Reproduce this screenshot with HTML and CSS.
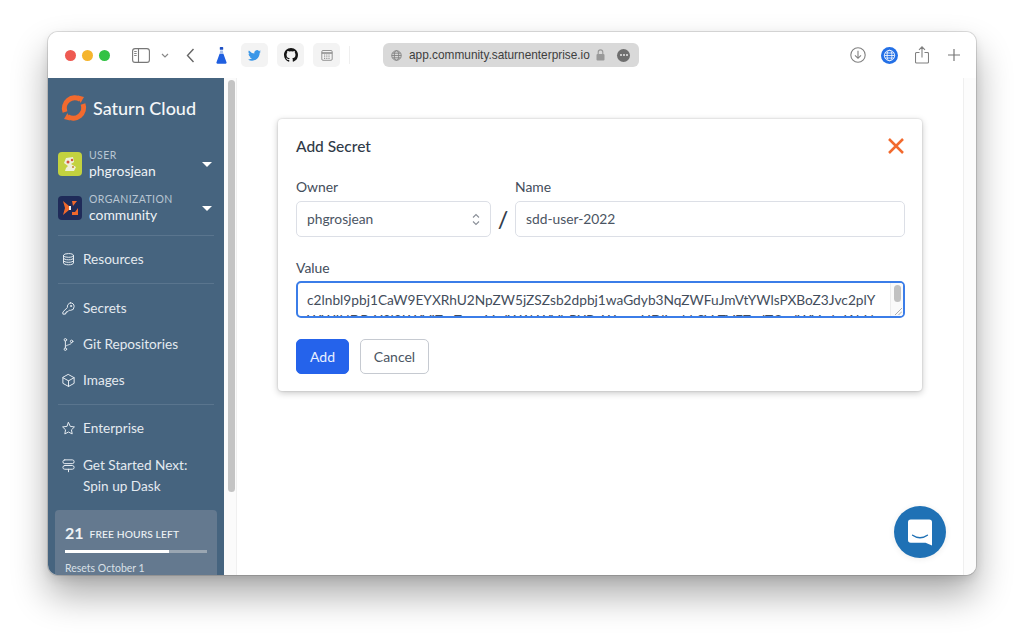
FILE: index.html
```html
<!DOCTYPE html>
<html lang="en">
<head>
<meta charset="utf-8">
<title>Saturn Cloud - Add Secret</title>
<link rel="stylesheet" href="styles.css">
</head>
<body>
<div class="window">
  <header class="toolbar">
    <div class="lights"><span class="light red"></span><span class="light yellow"></span><span class="light green"></span></div>
    <svg class="tb-sidebar" width="18" height="15" viewBox="0 0 18 15" fill="none" stroke="#777" stroke-width="1.1"><rect x=".6" y=".6" width="16.8" height="13.8" rx="2.5"/><path d="M6.5 .6v13.8"/><path d="M2.2 3.5h2.5M2.2 5.5h2.5M2.2 7.5h2.5" stroke-width=".9"/></svg>
    <svg class="tb-chev" width="8" height="5" viewBox="0 0 8 5" fill="none" stroke="#888" stroke-width="1.2"><path d="M1 1l3 3 3-3"/></svg>
    <svg class="tb-back" width="9" height="15" viewBox="0 0 9 15" fill="none" stroke="#666" stroke-width="1.4"><path d="M7.5 1L1.5 7.5l6 6.5"/></svg>
    <svg class="tb-flask" width="11" height="17" viewBox="0 0 10 16"><rect x="3.4" y="0" width="3.2" height="2.6" rx=".6" fill="#1d4fc4"/><path d="M3.8 3.2h2.4l.5 3H3.3z" fill="#a9c1ea"/><path d="M3.2 6.4h3.600l2.900 8a1 1 0 0 1-1 1.400H1.300a1 1 0 0 1-1-1.400z" fill="#1f5fe0"/></svg>
    <div class="tiles">
      <span class="tile"><svg width="13" height="11" viewBox="0 0 24 20"><path fill="#3a97e8" d="M24 2.400a9.800 9.800 0 0 1-2.800.8A4.900 4.900 0 0 0 23.300.5a9.800 9.800 0 0 1-3.100 1.200 4.900 4.900 0 0 0-8.400 4.500A14 14 0 0 1 1.700.9a4.900 4.900 0 0 0 1.500 6.600 4.900 4.900 0 0 1-2.200-.6v.1a4.900 4.900 0 0 0 3.900 4.800 4.900 4.900 0 0 1-2.200.1 4.900 4.900 0 0 0 4.600 3.400A9.900 9.900 0 0 1 0 17.300 14 14 0 0 0 7.500 19.500c9.100 0 14-7.500 14-14v-.6A10 10 0 0 0 24 2.400z"/></svg></span>
      <span class="tile"><svg width="14" height="14" viewBox="0 0 16 16"><path fill="#161616" d="M8 0C3.580 0 0 3.580 0 8c0 3.540 2.290 6.530 5.470 7.590.4.070.55-.17.55-.38 0-.19-.01-.82-.01-1.490-2.010.37-2.530-.49-2.690-.94-.09-.23-.48-.94-.82-1.130-.28-.15-.68-.52-.01-.53.63-.01 1.080.58 1.230.82.720 1.210 1.870.87 2.330.66.070-.52.280-.87.510-1.070-1.780-.2-3.640-.89-3.640-3.950 0-.87.310-1.590.820-2.150-.08-.2-.36-1.020.08-2.120 0 0 .67-.21 2.200.82a7.420 7.420 0 0 1 4 0c1.530-1.040 2.200-.82 2.200-.82.440 1.100.16 1.920.08 2.120.51.560.82 1.270.82 2.150 0 3.070-1.870 3.750-3.650 3.950.29.250.54.730.54 1.480 0 1.070-.01 1.930-.01 2.200 0 .21.150.46.550.38A8.010 8.010 0 0 0 16 8c0-4.420-3.580-8-8-8z"/></svg></span>
      <span class="tile"><svg width="12" height="12" viewBox="0 0 12 12" fill="none" stroke="#8a8a8a" stroke-width=".9"><rect x=".8" y="1.500" width="10.400" height="9.800" rx="1.200"/><path d="M.8 4h10.400" stroke-width="1.500"/><path d="M3 6h6M3 7.800h6M3 9.500h6" stroke-dasharray="1 .8"/></svg></span>
    </div>
    <span class="tb-sep"></span>
    <div class="urlbar">
      <svg width="11" height="11" viewBox="0 0 12 12" fill="none" stroke="#7c7c7c" stroke-width=".9"><circle cx="6" cy="6" r="5.200"/><ellipse cx="6" cy="6" rx="2.400" ry="5.200"/><path d="M.8 6h10.400M1.500 3.500h9M1.500 8.500h9"/></svg>
      <span class="url">app.community.saturnenterprise.io</span>
      <svg width="9" height="12" viewBox="0 0 9 12"><rect x=".5" y="5" width="8" height="6.500" rx="1" fill="#999"/><path d="M2.200 5V3.200a2.300 2.300 0 0 1 4.600 0V5" fill="none" stroke="#999" stroke-width="1.100"/></svg>
      <span class="more"><i></i><i></i><i></i></span>
    </div>
    <div class="tb-right">
      <svg width="16" height="16" viewBox="0 0 16 16" fill="none" stroke="#808080" stroke-width="1.100"><circle cx="8" cy="8" r="7.200"/><path d="M8 3.800v7.400M5 8.300l3 3 3-3"/></svg>
      <svg width="17" height="17" viewBox="0 0 17 17"><circle cx="8.500" cy="8.500" r="8.500" fill="#2470e6"/><g fill="none" stroke="#fff" stroke-width=".8"><circle cx="8.500" cy="8.500" r="5.200"/><ellipse cx="8.500" cy="8.500" rx="2.400" ry="5.200"/><path d="M3.300 8.500h10.400M4 6h9M4 11h9"/></g></svg>
      <svg width="14" height="18" viewBox="0 0 14 18" fill="none" stroke="#808080" stroke-width="1.100"><path d="M4.500 6.500H1.500a1 1 0 0 0-1 1v8.500a1 1 0 0 0 1 1h11a1 1 0 0 0 1-1V7.500a1 1 0 0 0-1-1H9.500M7 11.500V1M4 3.800L7 .8l3 3"/></svg>
      <svg width="12" height="12" viewBox="0 0 12 12" fill="none" stroke="#777" stroke-width="1.200"><path d="M6 0v12M0 6h12"/></svg>
    </div>
  </header>

  <div class="viewport">
    <aside class="sidebar">
      <div class="brand">
        <svg width="26" height="26" viewBox="0 0 26 26" fill="none" stroke="#f26a2e" stroke-width="5"><path d="M4 17A10.500 10.500 0 0 1 19.500 4.500"/><path d="M22 9A10.500 10.500 0 0 1 6.500 21.500"/><path d="M17 0.500l6 1.500-3.500 6z" fill="#f26a2e" stroke="none"/><path d="M9 25.500l-6-1.500 3.500-6z" fill="#f26a2e" stroke="none"/></svg>
        <span class="brand-name">Saturn Cloud</span>
      </div>
      <div class="accounts">
        <div class="account">
          <svg class="avatar" width="24" height="24" viewBox="0 0 24 24"><rect width="24" height="24" rx="4" fill="#c3d23f"/><path d="M8 6l7-1 1 5-3 2 5 3-2 4H7l1-3 2-2-4-3z" fill="#eef0d8"/><circle cx="10" cy="10" r="1.500" fill="#d8553c"/><circle cx="14" cy="8" r="1.200" fill="#d8553c"/><circle cx="15" cy="15" r="1.100" fill="#c98a3c"/></svg>
          <div class="account-text"><span class="account-kind">USER</span><span class="account-name">phgrosjean</span></div>
          <span class="caret"></span>
        </div>
        <div class="account">
          <svg class="avatar" width="24" height="24" viewBox="0 0 24 24"><rect width="24" height="24" rx="4" fill="#1f2b59"/><path d="M5 5l6 5 2 0v4l-2 0-6 5 2-7z" fill="#f0682c"/><path d="M11 10h2v4h-2z" fill="#f4f1ec"/><path d="M14 5h5l-4 5zM14 19h6v-7l-3 4h-3z" fill="#f0682c"/></svg>
          <div class="account-text"><span class="account-kind">ORGANIZATION</span><span class="account-name">community</span></div>
          <span class="caret"></span>
        </div>
      </div>
      <nav class="nav">
        <div class="nav-group">
          <a class="nav-item"><svg class="nav-icon" viewBox="0 0 24 24"><ellipse cx="12" cy="5.500" rx="8" ry="3"/><path d="M4 5.500v4c0 1.700 3.600 3 8 3s8-1.300 8-3v-4M4 9.500v4c0 1.700 3.600 3 8 3s8-1.300 8-3v-4M4 13.500v4c0 1.700 3.600 3 8 3s8-1.300 8-3v-4"/></svg>Resources</a>
        </div>
        <div class="nav-group">
          <a class="nav-item"><svg class="nav-icon" viewBox="0 0 24 24"><path d="M15 3a6 6 0 0 1 0 12c-.7 0-1.300-.1-1.900-.3L11 17H9v2H7v2H3v-3.500l7.300-7.200A6 6 0 0 1 15 3z"/><circle cx="16" cy="8" r="1"/></svg>Secrets</a>
          <a class="nav-item"><svg class="nav-icon" viewBox="0 0 24 24"><circle cx="7" cy="4.500" r="2"/><circle cx="7" cy="19.500" r="2"/><circle cx="17" cy="7" r="2"/><path d="M7 6.500v11M17 9c0 4-10 3-10 7"/></svg>Git Repositories</a>
          <a class="nav-item"><svg class="nav-icon" viewBox="0 0 24 24"><path d="M12 2.500l9 5v9l-9 5-9-5v-9zM3 7.500l9 5 9-5M12 12.500v9"/></svg>Images</a>
        </div>
        <div class="nav-group">
          <a class="nav-item"><svg class="nav-icon" viewBox="0 0 24 24"><path d="M12 2.500l2.900 6.100 6.600.9-4.800 4.600 1.200 6.600L12 17.600l-5.900 3.100 1.200-6.600L2.500 9.500l6.600-.9z"/></svg>Enterprise</a>
          <a class="nav-item two-line"><svg class="nav-icon" viewBox="0 0 24 24"><rect x="3" y="3" width="18" height="6" rx="3"/><rect x="3" y="12" width="18" height="6" rx="3"/><path d="M12 18v4"/></svg><span>Get Started Next:<br>Spin up Dask</span></a>
        </div>
      </nav>
      <div class="hours">
        <div class="hours-head"><strong>21</strong><span>FREE HOURS LEFT</span></div>
        <div class="hours-bar"><div class="hours-fill"></div></div>
        <div class="hours-note">Resets October 1</div>
      </div>
    </aside>
    <div class="scrolltrack"><div class="scrollthumb"></div></div>
    <main class="main">
      <section class="dialog">
        <div class="dialog-head">
          <h1>Add Secret</h1>
          <svg width="16" height="16" viewBox="0 0 16 16" fill="none" stroke="#f26a2e" stroke-width="2.500"><path d="M1 1l14 14M15 1L1 15"/></svg>
        </div>
        <div class="owner-row">
          <div class="field owner">
            <label>Owner</label>
            <div class="control select">phgrosjean
              <svg width="8" height="13" viewBox="0 0 8 13" fill="none" stroke="#8a8f98" stroke-width="1.100"><path d="M1 4.500L4 1.500l3 3M1 8.500l3 3 3-3"/></svg>
            </div>
          </div>
          <span class="slash">/</span>
          <div class="field name">
            <label>Name</label>
            <div class="control">sdd-user-2022</div>
          </div>
        </div>
        <div class="field value">
          <label>Value</label>
          <div class="textarea">
            <div class="textarea-text">c2lnbl9pbj1CaW9EYXRhU2NpZW5jZSZsb2dpbj1waGdyb3NqZWFuJmVtYWlsPXBoZ3Jvc2plY<br>WWINDBzY2l2LWVjZmZzcmVzdW1hWVlsPXBoWmxoUDljcnhbSVcTVFZvdTQzdWVxdcJAbN</div>
            <div class="ta-scroll"><span></span></div>
            <svg class="ta-grip" width="7" height="7" viewBox="0 0 7 7" stroke="#999" stroke-width=".8"><path d="M0 7L7 0M3.500 7L7 3.500"/></svg>
          </div>
        </div>
        <div class="actions">
          <button class="btn primary">Add</button>
          <button class="btn">Cancel</button>
        </div>
      </section>
      <button class="launcher" aria-label="Chat">
        <svg width="24" height="27" viewBox="0 0 26 28"><path fill="#fff" d="M3 0h20a3 3 0 0 1 3 3v25l-7-3H3a3 3 0 0 1-3-3V3a3 3 0 0 1 3-3z"/><path d="M5 17c5 3.500 11 3.500 16 0" fill="none" stroke="#1f71b5" stroke-width="1.600" stroke-linecap="round"/></svg>
      </button>
    </main>
    <div class="rightstrip"></div>
  </div>
</div>
</body>
</html>
```

FILE: styles.css
```css
* { box-sizing: border-box; }
html, body { margin: 0; height: 100%; }
body {
  background: #fff;
  padding: 32px 48px 0;
  font-family: Lato, "Liberation Sans", sans-serif;
  overflow: hidden;
}
.window {
  width: 928px;
  height: 543px;
  border-radius: 10px;
  background: #fff;
  overflow: hidden;
  display: flex;
  flex-direction: column;
  box-shadow: 0 0 0 1px rgba(0,0,0,.12), 0 20px 36px rgba(0,0,0,.33), 0 4px 10px rgba(0,0,0,.1);
}
.toolbar {
  height: 46px;
  flex: none;
  display: flex;
  align-items: center;
  background: #fff;
  font-family: "Liberation Sans", sans-serif;
}
.lights { display: flex; gap: 6px; margin-left: 17px; }
.light { width: 11px; height: 11px; border-radius: 50%; }
.red { background: #ee5a52; }
.yellow { background: #f5b52e; }
.green { background: #32c244; }
.tb-sidebar { margin-left: 22px; }
.tb-chev { margin-left: 11px; }
.tb-back { margin-left: 17px; }
.tb-flask { margin-left: 21px; }
.tiles { display: flex; gap: 9px; margin-left: 14px; }
.tile {
  width: 27px;
  height: 24px;
  border-radius: 5px;
  background: #f3f3f3;
  display: flex;
  align-items: center;
  justify-content: center;
}
.tb-sep { width: 1px; height: 18px; background: #efefef; margin-left: 9px; }
.urlbar {
  width: 256px;
  height: 24px;
  margin-left: 33px;
  border-radius: 6px;
  background: #d9d9d9;
  display: flex;
  align-items: center;
  padding: 0 9px 0 8px;
}
.url { font-size: 11.850px; color: #3e3e3e; margin-left: 7px; margin-right: 6px; white-space: nowrap; }
.more {
  width: 13px;
  height: 13px;
  border-radius: 50%;
  background: #6e6e6e;
  margin-left: auto;
  display: flex;
  align-items: center;
  justify-content: center;
  gap: 1px;
}
.more i { width: 2px; height: 2px; border-radius: 50%; background: #e6e6e6; }
.tb-right {
  margin-left: auto;
  margin-right: 6.500px;
  display: grid;
  grid-template-columns: repeat(4, 32px);
  justify-items: center;
  align-items: center;
}
.viewport { flex: 1; min-height: 0; display: flex; }
.sidebar {
  width: 176px;
  flex: none;
  background: #46647f;
  color: #e4eaf0;
  overflow: hidden;
}
.brand { height: 60px; display: flex; align-items: center; gap: 6px; padding-left: 13px; }
.brand-name { font-size: 18px; color: #f4f6f8; font-weight: 500; }
.accounts {
  margin: 14px 10px 0;
  padding-bottom: 15px;
  display: flex;
  flex-direction: column;
  gap: 20px;
  border-bottom: 1px solid #5a758e;
}
.account { display: flex; align-items: center; height: 24px; }
.avatar { flex: none; }
.account-text { display: flex; flex-direction: column; margin-left: 7px; }
.account-kind { font-size: 10.500px; line-height: 14px; letter-spacing: .4px; color: #b9c6d3; }
.account-name { font-size: 13.900px; line-height: 18px; color: #eef2f5; }
.caret {
  margin-left: auto;
  margin-right: 2px;
  border-left: 5px solid transparent;
  border-right: 5px solid transparent;
  border-top: 5px solid #fff;
}
.nav { margin: 0 10px; }
.nav-group { padding: 5px 0 7px; border-bottom: 1px solid #5a758e; }
.nav-group:first-child { padding-top: 4px; }
.nav-group:last-child { border-bottom: 0; padding: 4px 0 0; }
.nav-item {
  min-height: 36px;
  display: flex;
  align-items: center;
  gap: 7px;
  padding: 2px 0 0 3px;
  font-size: 13.600px;
  line-height: 21px;
  color: #e4eaf0;
}
.two-line { align-items: flex-start; padding-top: 10px; margin-bottom: -1px; }
.two-line .nav-icon { margin-top: 3px; }
.nav-icon {
  width: 15px;
  height: 15px;
  flex: none;
  fill: none;
  stroke: #e4eaf0;
  stroke-width: 1.600;
  stroke-linejoin: round;
  stroke-linecap: round;
}
.hours {
  margin: 14px 7px 0;
  height: 80px;
  padding: 11px 10px;
  background: #64798f;
  border-radius: 4px;
  color: #eef2f5;
}
.hours-head { display: flex; align-items: center; gap: 6px; height: 22px; }
.hours-head strong { font-size: 16px; font-weight: 700; }
.hours-head span { font-size: 10.250px; font-weight: 500; letter-spacing: .1px; padding-top: 3px; }
.hours-bar { height: 3px; margin-top: 7px; background: #9aa6b2; }
.hours-fill { width: 73%; height: 3px; background: #fff; }
.hours-note { font-size: 10.500px; margin-top: 9px; color: #d9e0e7; }
.scrolltrack { width: 13px; flex: none; background: #fbfbfb; border-right: 1px solid #f0f0f0; padding: 2px 2px 0 4px; }
.scrollthumb { width: 7px; height: 412px; border-radius: 4px; background: #c4c4c4; }
.main { flex: 1; min-width: 0; background: #fff; padding: 41px 41px 0; position: relative; }
.rightstrip { width: 13px; flex: none; background: #fcfcfc; border-left: 1px solid #efefef; }
.dialog {
  width: 644px;
  height: 272px;
  background: #fff;
  border-radius: 4px;
  padding: 0 18px;
  box-shadow: 0 0 2px rgba(0,0,0,.2), 0 2px 7px rgba(0,0,0,.22);
  color: #3f4a59;
}
.dialog-head {
  height: 54px;
  padding-bottom: 1px;
  display: flex;
  align-items: center;
  justify-content: space-between;
}
.dialog-head h1 { margin: 0; font-size: 15.500px; font-weight: 500; color: #2f3a48; }
.owner-row { display: flex; align-items: flex-end; margin-top: 5px; }
.field label { display: block; font-size: 13.900px; line-height: 18px; margin-bottom: 5px; color: #434d5b; }
.owner { width: 195px; flex: none; }
.name { flex: 1; margin-right: -1px; }
.slash { width: 24px; text-align: center; font-size: 23px; font-weight: 500; line-height: 36px; color: #333d4b; }
.control {
  height: 36px;
  border: 1px solid #dcdfe6;
  border-radius: 5px;
  padding: 0 10px 2px;
  display: flex;
  align-items: center;
  justify-content: space-between;
  font-size: 13.800px;
  color: #4b5563;
}
.select svg { margin-top: 2px; }
.value { margin-top: 22px; margin-right: -1px; }
.value label { margin-bottom: 4px; }
.textarea {
  height: 37px;
  border: 2px solid #3b7de8;
  border-radius: 5px;
  padding: 7px 0 0 9px;
  overflow: hidden;
  position: relative;
  font-size: 13.730px;
  line-height: 20px;
  color: #434d5b;
  white-space: nowrap;
}
.ta-scroll {
  position: absolute;
  top: 0;
  right: 0;
  bottom: 0;
  width: 13px;
  background: #fafafa;
  border-left: 1px solid #ececec;
  padding: 2px 2px 0 3px;
}
.ta-scroll span { display: block; width: 7px; height: 17px; border-radius: 4px; background: #c1c1c1; }
.ta-grip { position: absolute; right: 1px; bottom: 1px; }
.actions { display: flex; gap: 11px; margin-top: 21px; }
.btn {
  height: 35px;
  width: 69px;
  padding: 0;
  border: 1px solid #c6cad1;
  border-radius: 5px;
  background: #fff;
  color: #4b5563;
  font: 14px Lato, "Liberation Sans", sans-serif;
}
.primary { width: 53px; background: #2563eb; border-color: #2563eb; color: #e8f0ff; }
.launcher {
  position: absolute;
  right: 17px;
  bottom: 17px;
  width: 52px;
  height: 52px;
  border: 0;
  padding: 0;
  border-radius: 50%;
  background: #1f71b5;
  display: flex;
  align-items: center;
  justify-content: center;
  box-shadow: 0 1px 6px rgba(0,0,0,.08);
}
```
